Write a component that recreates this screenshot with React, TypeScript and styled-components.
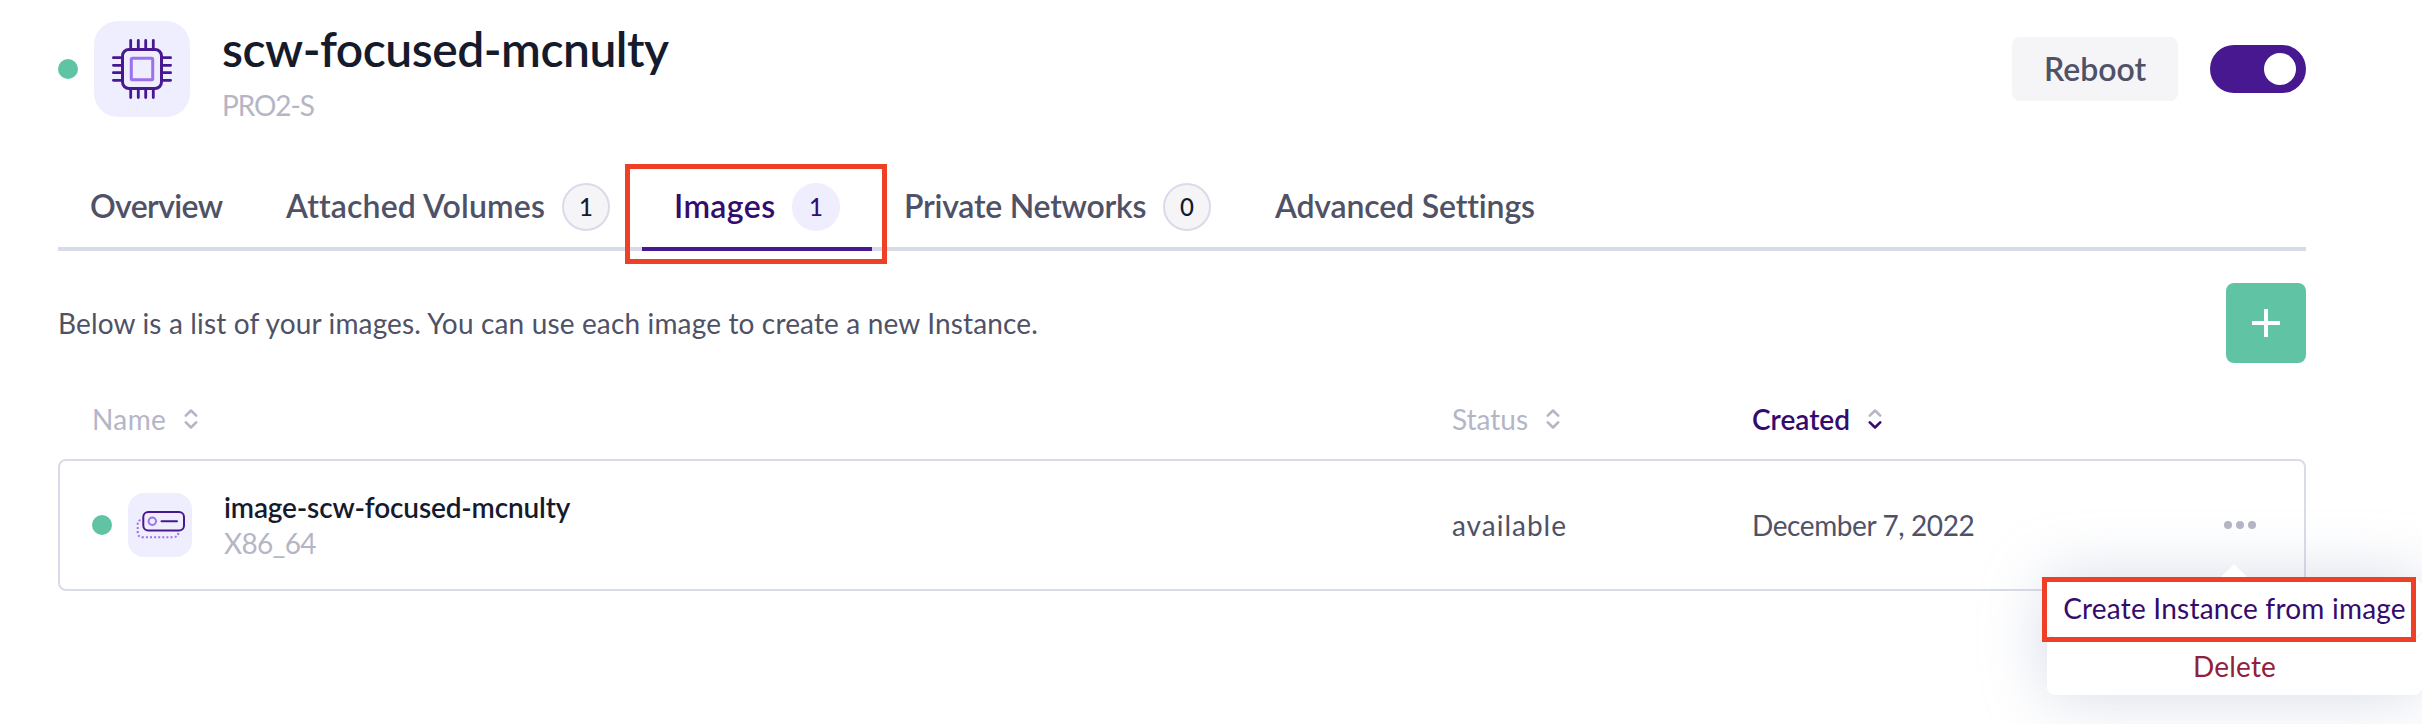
import React from 'react';
import styled, { createGlobalStyle, css } from 'styled-components';

const color = {
  primary: '#481890',
  primaryText: '#350b6e',
  lilac: '#9d70f0',
  tile: '#efeefe',
  text: '#4f5266',
  strong: '#151a2d',
  muted: '#b4b6c6',
  border: '#d8dbe9',
  surface: '#f5f5f8',
  success: '#60c4a4',
  danger: '#92203a',
  callout: '#ee4026',
};

const GlobalStyle = createGlobalStyle`
  *, *::before, *::after { box-sizing: border-box; }
  body { margin: 0; background: #fff; }
  button { font: inherit; border: 0; background: none; }
`;

const Page = styled.main`
  height: 724px;
  padding: 17px 116px 0 58px;
  overflow: hidden;
  font-family: Lato, 'Open Sans', sans-serif;
  font-size: 28px;
  font-variant-ligatures: none;
  line-height: 36px;
  color: ${color.text};
`;

const Label = styled.span<{ $spacing?: number }>`
  letter-spacing: ${({ $spacing = 0 }) => $spacing}px;
  padding-bottom: 1px;
  white-space: nowrap;
`;

const Header = styled.header`
  display: flex;
  align-items: center;
  height: 104px;
`;

const StatusDot = styled.span`
  flex: none;
  width: 20px;
  height: 20px;
  border-radius: 50%;
  background: ${color.success};
`;

const IconTile = styled.div<{ $size: number }>`
  flex: none;
  width: ${({ $size }) => $size}px;
  height: ${({ $size }) => $size}px;
  margin: 0 32px 0 16px;
  border-radius: ${({ $size }) => $size / 4}px;
  background: ${color.tile};
  svg { display: block; }
`;

const Heading = styled.div`
  align-self: flex-start;
  display: flex;
  flex-direction: column;
  gap: 7px;
  padding-top: 1px;
`;

const Title = styled.h1`
  margin: 0;
  font-size: 48px;
  font-weight: 600;
  line-height: 62px;
  letter-spacing: -0.5px;
  color: ${color.strong};
`;

const Muted = styled(Label)`
  color: ${color.muted};
`;

const HeaderActions = styled.div`
  display: flex;
  align-items: center;
  gap: 32px;
  margin-left: auto;
`;

const RebootButton = styled.button`
  width: 166px;
  height: 64px;
  padding: 0 0 1px;
  border-radius: 8px;
  background: ${color.surface};
  color: ${color.text};
  font-size: 32px;
  font-weight: 600;
  letter-spacing: 0;
`;

const Toggle = styled.button`
  display: flex;
  justify-content: flex-end;
  align-items: center;
  width: 96px;
  height: 48px;
  padding: 0 10px;
  border-radius: 24px;
  background: ${color.primary};
`;

const Knob = styled.span`
  width: 32px;
  height: 32px;
  border-radius: 50%;
  background: #fff;
`;

const TabBar = styled.nav`
  display: flex;
  height: 84px;
  margin-top: 46px;
  box-shadow: inset 0 -4px ${color.border};
`;

const Tab = styled.div<{ $width: number; $active?: boolean }>`
  position: relative;
  display: flex;
  align-items: center;
  justify-content: space-between;
  width: ${({ $width }) => $width}px;
  padding: 0 32px;
  border-bottom: 4px solid ${({ $active }) => ($active ? color.primary : 'transparent')};
  color: ${({ $active }) => ($active ? color.primaryText : color.text)};
  font-size: 32px;
  font-weight: 600;
  ${Label} { padding-bottom: 2px; }
`;

const Badge = styled.span<{ $active?: boolean }>`
  display: flex;
  align-items: center;
  justify-content: center;
  width: 48px;
  height: 48px;
  border: 2px solid ${({ $active }) => ($active ? color.tile : color.border)};
  border-radius: 50%;
  background: ${({ $active }) => ($active ? color.tile : color.surface)};
  color: ${({ $active }) => ($active ? color.primaryText : color.strong)};
  font-size: 24px;
  font-weight: 500;
`;

const calloutFrame = css`
  content: '';
  position: absolute;
  border: 5px solid ${color.callout};
  pointer-events: none;
`;

const HighlightedTab = styled(Tab)`
  &::after {
    ${calloutFrame}
    inset: -3px -15px -17px -17px;
  }
`;

const Intro = styled.section`
  display: flex;
  align-items: center;
  justify-content: space-between;
  height: 80px;
  margin-top: 32px;
`;

const AddButton = styled.button`
  display: flex;
  align-items: center;
  justify-content: center;
  width: 80px;
  height: 80px;
  padding: 0;
  border-radius: 8px;
  background: ${color.success};
`;

const columns = css`
  display: grid;
  grid-template-columns: 1360px 300px 1fr auto;
  align-items: center;
`;

const TableHead = styled.div`
  ${columns}
  height: 96px;
  padding: 16px 50px 0 34px;
`;

const HeadCell = styled.div<{ $active?: boolean }>`
  display: flex;
  align-items: center;
  gap: 18px;
  color: ${({ $active }) => ($active ? color.primaryText : color.muted)};
  font-weight: ${({ $active }) => ($active ? 600 : 400)};
`;

const TableRow = styled.div`
  ${columns}
  height: 132px;
  padding: 0 48px 0 32px;
  border: 2px solid ${color.border};
  border-radius: 8px;
`;

const NameCell = styled.div`
  display: flex;
  align-items: center;
`;

const NameText = styled.div`
  display: flex;
  flex-direction: column;
  padding-bottom: 1px;
  ${Label} { padding-bottom: 0; }
`;

const ImageName = styled(Label)`
  color: ${color.strong};
  font-weight: 600;
`;

const Actions = styled.div`
  position: relative;
`;

const MoreButton = styled.button`
  display: flex;
  gap: 4px;
  padding: 0;
`;

const MoreDot = styled.span`
  width: 8px;
  height: 8px;
  border-radius: 50%;
  background: ${color.muted};
`;

const Menu = styled.div`
  position: absolute;
  top: 58px;
  left: -177px;
  width: 375px;
  border-radius: 8px;
  background: #fff;
  box-shadow: 0 0 64px rgba(150, 160, 195, 0.4);
  &::before {
    content: '';
    position: absolute;
    top: -15px;
    left: 172px;
    border: 15px solid transparent;
    border-top: 0;
    border-bottom-color: #fff;
  }
`;

const MenuItem = styled.button<{ $danger?: boolean }>`
  position: relative;
  display: flex;
  align-items: center;
  justify-content: center;
  width: 100%;
  height: 58px;
  padding: 0;
  border-radius: 8px;
  color: ${({ $danger }) => ($danger ? color.danger : color.primaryText)};
`;

const HighlightedItem = styled(MenuItem)`
  box-shadow: 0 1px #ebecf2;
  &::after {
    ${calloutFrame}
    inset: -2px 6px -5px -5px;
  }
`;

const pins = [36.7, 44.3, 51.7, 59.3];

const ChipIcon = () => (
  <svg width="96" height="96" viewBox="0 0 96 96" fill="none" stroke={color.primary} strokeLinecap="round">
    <g strokeWidth="2.8">
      {pins.map((p) => (
        <path key={p} d={`M${p} 19.4V27M${p} 69v7.6M19.4 ${p}H27M69 ${p}h7.6`} />
      ))}
    </g>
    <rect x="28.5" y="28.5" width="39" height="39" rx="6.5" strokeWidth="3" />
    <rect x="37.3" y="37.3" width="21.4" height="21.4" rx="1" stroke={color.lilac} strokeWidth="3" />
  </svg>
);

const ImageIcon = () => (
  <svg width="64" height="64" viewBox="0 0 64 64" fill="none" strokeWidth="2">
    <path
      d="M12.6 27.2Q9.7 27.2 9.7 31V39Q9.7 44.3 15 44.3H45Q50.5 44.3 50.5 38.5"
      stroke={color.lilac}
      strokeDasharray="2 2.1"
    />
    <rect x="15.3" y="19" width="40.7" height="18.4" rx="5" stroke={color.primary} />
    <circle cx="24.3" cy="28.3" r="3.7" stroke={color.lilac} />
    <path d="M33.5 28.3H49" stroke={color.primary} strokeLinecap="round" />
  </svg>
);

const SortIcon = ({ descending }: { descending?: boolean }) => (
  <svg width="14" height="20" viewBox="0 0 14 20" fill="none" strokeWidth="2.6" strokeLinecap="round" strokeLinejoin="round">
    <path d="M1.8 6.6 7 1.5l5.2 5.1" stroke={color.muted} />
    <path d="m1.8 13.4 5.2 5.1 5.2-5.1" stroke={descending ? color.primaryText : color.muted} />
  </svg>
);

const PlusIcon = () => (
  <svg width="28" height="28" viewBox="0 0 28 28" stroke="#fff" strokeWidth="4">
    <path d="M14 0v28M0 14h28" />
  </svg>
);

export default function App() {
  return (
    <>
      <GlobalStyle />
      <Page>
        <Header>
          <StatusDot />
          <IconTile $size={96}><ChipIcon /></IconTile>
          <Heading>
            <Title>scw-focused-mcnulty</Title>
            <Muted $spacing={-1.1}>PRO2-S</Muted>
          </Heading>
          <HeaderActions>
            <RebootButton>Reboot</RebootButton>
            <Toggle role="switch" aria-checked="true"><Knob /></Toggle>
          </HeaderActions>
        </Header>

        <TabBar>
          <Tab $width={196}><Label $spacing={-0.65}>Overview</Label></Tab>
          <Tab $width={388}><Label $spacing={0.15}>Attached Volumes</Label><Badge>1</Badge></Tab>
          <HighlightedTab $width={230} $active>
            <Label $spacing={0.4}>Images</Label><Badge $active>1</Badge>
          </HighlightedTab>
          <Tab $width={371}><Label $spacing={-0.25}>Private Networks</Label><Badge>0</Badge></Tab>
          <Tab $width={322}><Label $spacing={-0.15}>Advanced Settings</Label></Tab>
        </TabBar>

        <Intro>
          <Label $spacing={0.15}>
            Below is a list of your images. You can use each image to create a new Instance.
          </Label>
          <AddButton aria-label="Add"><PlusIcon /></AddButton>
        </Intro>

        <TableHead>
          <HeadCell><Label $spacing={0.4}>Name</Label><SortIcon /></HeadCell>
          <HeadCell><Label>Status</Label><SortIcon /></HeadCell>
          <HeadCell $active><Label>Created</Label><SortIcon descending /></HeadCell>
        </TableHead>

        <TableRow>
          <NameCell>
            <StatusDot />
            <IconTile $size={64}><ImageIcon /></IconTile>
            <NameText>
              <ImageName $spacing={-0.15}>image-scw-focused-mcnulty</ImageName>
              <Muted $spacing={-0.7}>X86_64</Muted>
            </NameText>
          </NameCell>
          <Label $spacing={1}>available</Label>
          <Label $spacing={-0.4}>December 7, 2022</Label>
          <Actions>
            <MoreButton aria-label="More actions"><MoreDot /><MoreDot /><MoreDot /></MoreButton>
            <Menu>
              <HighlightedItem><Label $spacing={0.22}>Create Instance from image</Label></HighlightedItem>
              <MenuItem $danger><Label $spacing={0.2}>Delete</Label></MenuItem>
            </Menu>
          </Actions>
        </TableRow>
      </Page>
    </>
  );
}
